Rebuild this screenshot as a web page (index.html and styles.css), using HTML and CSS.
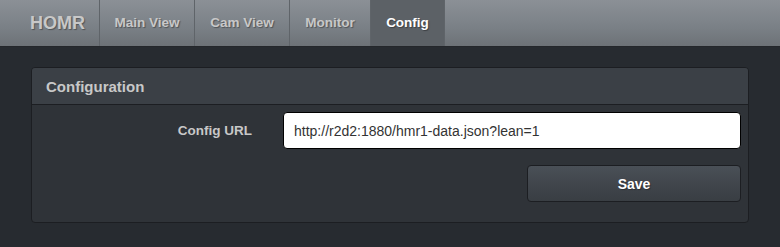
FILE: index.html
```html
<!DOCTYPE html>
<html lang="en">
  <head>
    <meta charset="utf-8">
    <title>HOMR - Config</title>
    <link rel="stylesheet" href="styles.css">
  </head>
  <body>

    <div class="navbar">
      <a class="brand" href="#">HOMR</a>
      <ul class="nav">
        <li class="wide"><a href="#">Main View</a></li>
        <li class="wide"><a href="#">Cam View</a></li>
        <li class="mid"><a href="#">Monitor</a></li>
        <li class="active"><a href="#">Config</a></li>
      </ul>
    </div>

    <div class="main">
      <div class="panel">
        <div class="panel-heading">Configuration</div>
        <form class="panel-body">
          <label class="label" for="url">Config URL</label>
          <input class="input" id="url" type="text" value="http://r2d2:1880/hmr1-data.json?lean=1">
          <span></span>
          <div class="actions">
            <button type="button" class="btn">Save</button>
          </div>
        </form>
      </div>
    </div>

  </body>
</html>
```

FILE: styles.css
```css
* {
  box-sizing: border-box;
}

body {
  margin: 0;
  background: #272b30;
  font-family: "Liberation Sans", Arial, sans-serif;
  color: #c8c8c8;
}

/* top bar */
.navbar {
  display: flex;
  height: 47px;
  background: linear-gradient(#8b9096, #7a8086 60%, #6d7277);
  border-bottom: 1px solid #24272b;
}

.brand {
  display: block;
  width: 100px;
  padding-left: 30px;
  line-height: 46px;
  font-size: 18px;
  font-weight: bold;
  color: #c8c8c8;
  text-decoration: none;
  text-shadow: 1px 1px 1px rgba(0,0,0,0.35);
  border-right: 1px solid #5f6469;
}

.nav {
  display: flex;
  margin: 0;
  padding: 0;
  list-style: none;
}

.nav li {
  border-right: 1px solid #5f6469;
}

.nav li.wide { width: 95px; }
.nav li.mid { width: 81px; }
.nav li.active { width: 74px; }

.nav a {
  display: block;
  line-height: 46px;
  text-align: center;
  font-size: 13.5px;
  font-weight: bold;
  color: #c8c8c8;
  text-decoration: none;
  text-shadow: 1px 1px 1px rgba(0,0,0,0.35);
}

.nav li.active {
  background: #5c6166;
}

.nav li.active a {
  color: #fff;
}

/* content */
.main {
  padding: 20px 31px;
}

.panel {
  background: #2f3338;
  border: 1px solid #1c1e22;
  border-radius: 4px;
}

.panel-heading {
  height: 37px;
  padding: 0 14px;
  line-height: 37px;
  font-size: 15px;
  font-weight: bold;
  color: #c8c8c8;
  background: #3b4046;
  border-bottom: 1px solid #1c1e22;
  border-radius: 3px 3px 0 0;
}

.panel-body {
  display: grid;
  grid-template-columns: 212px 1fr;
  column-gap: 31px;
  row-gap: 16px;
  margin: 0;
  padding: 7px 7px 20px 8px;
}

.label {
  align-self: center;
  text-align: right;
  font-size: 13.5px;
  font-weight: bold;
  color: #c8c8c8;
}

.input {
  height: 37px;
  padding: 0 10px;
  font-family: "Liberation Sans", Arial, sans-serif;
  font-size: 14px;
  color: #333;
  background: #fff;
  border: 1px solid #000;
  border-radius: 4px;
}

.actions {
  display: flex;
  justify-content: flex-end;
}

.btn {
  width: 214px;
  height: 37px;
  font-family: "Liberation Sans", Arial, sans-serif;
  font-size: 14px;
  font-weight: bold;
  color: #fff;
  text-shadow: 1px 1px 1px rgba(0,0,0,0.3);
  background: linear-gradient(#4a5057, #3f444a 60%, #393e43);
  border: 1px solid #1c1e22;
  border-radius: 4px;
}
```
